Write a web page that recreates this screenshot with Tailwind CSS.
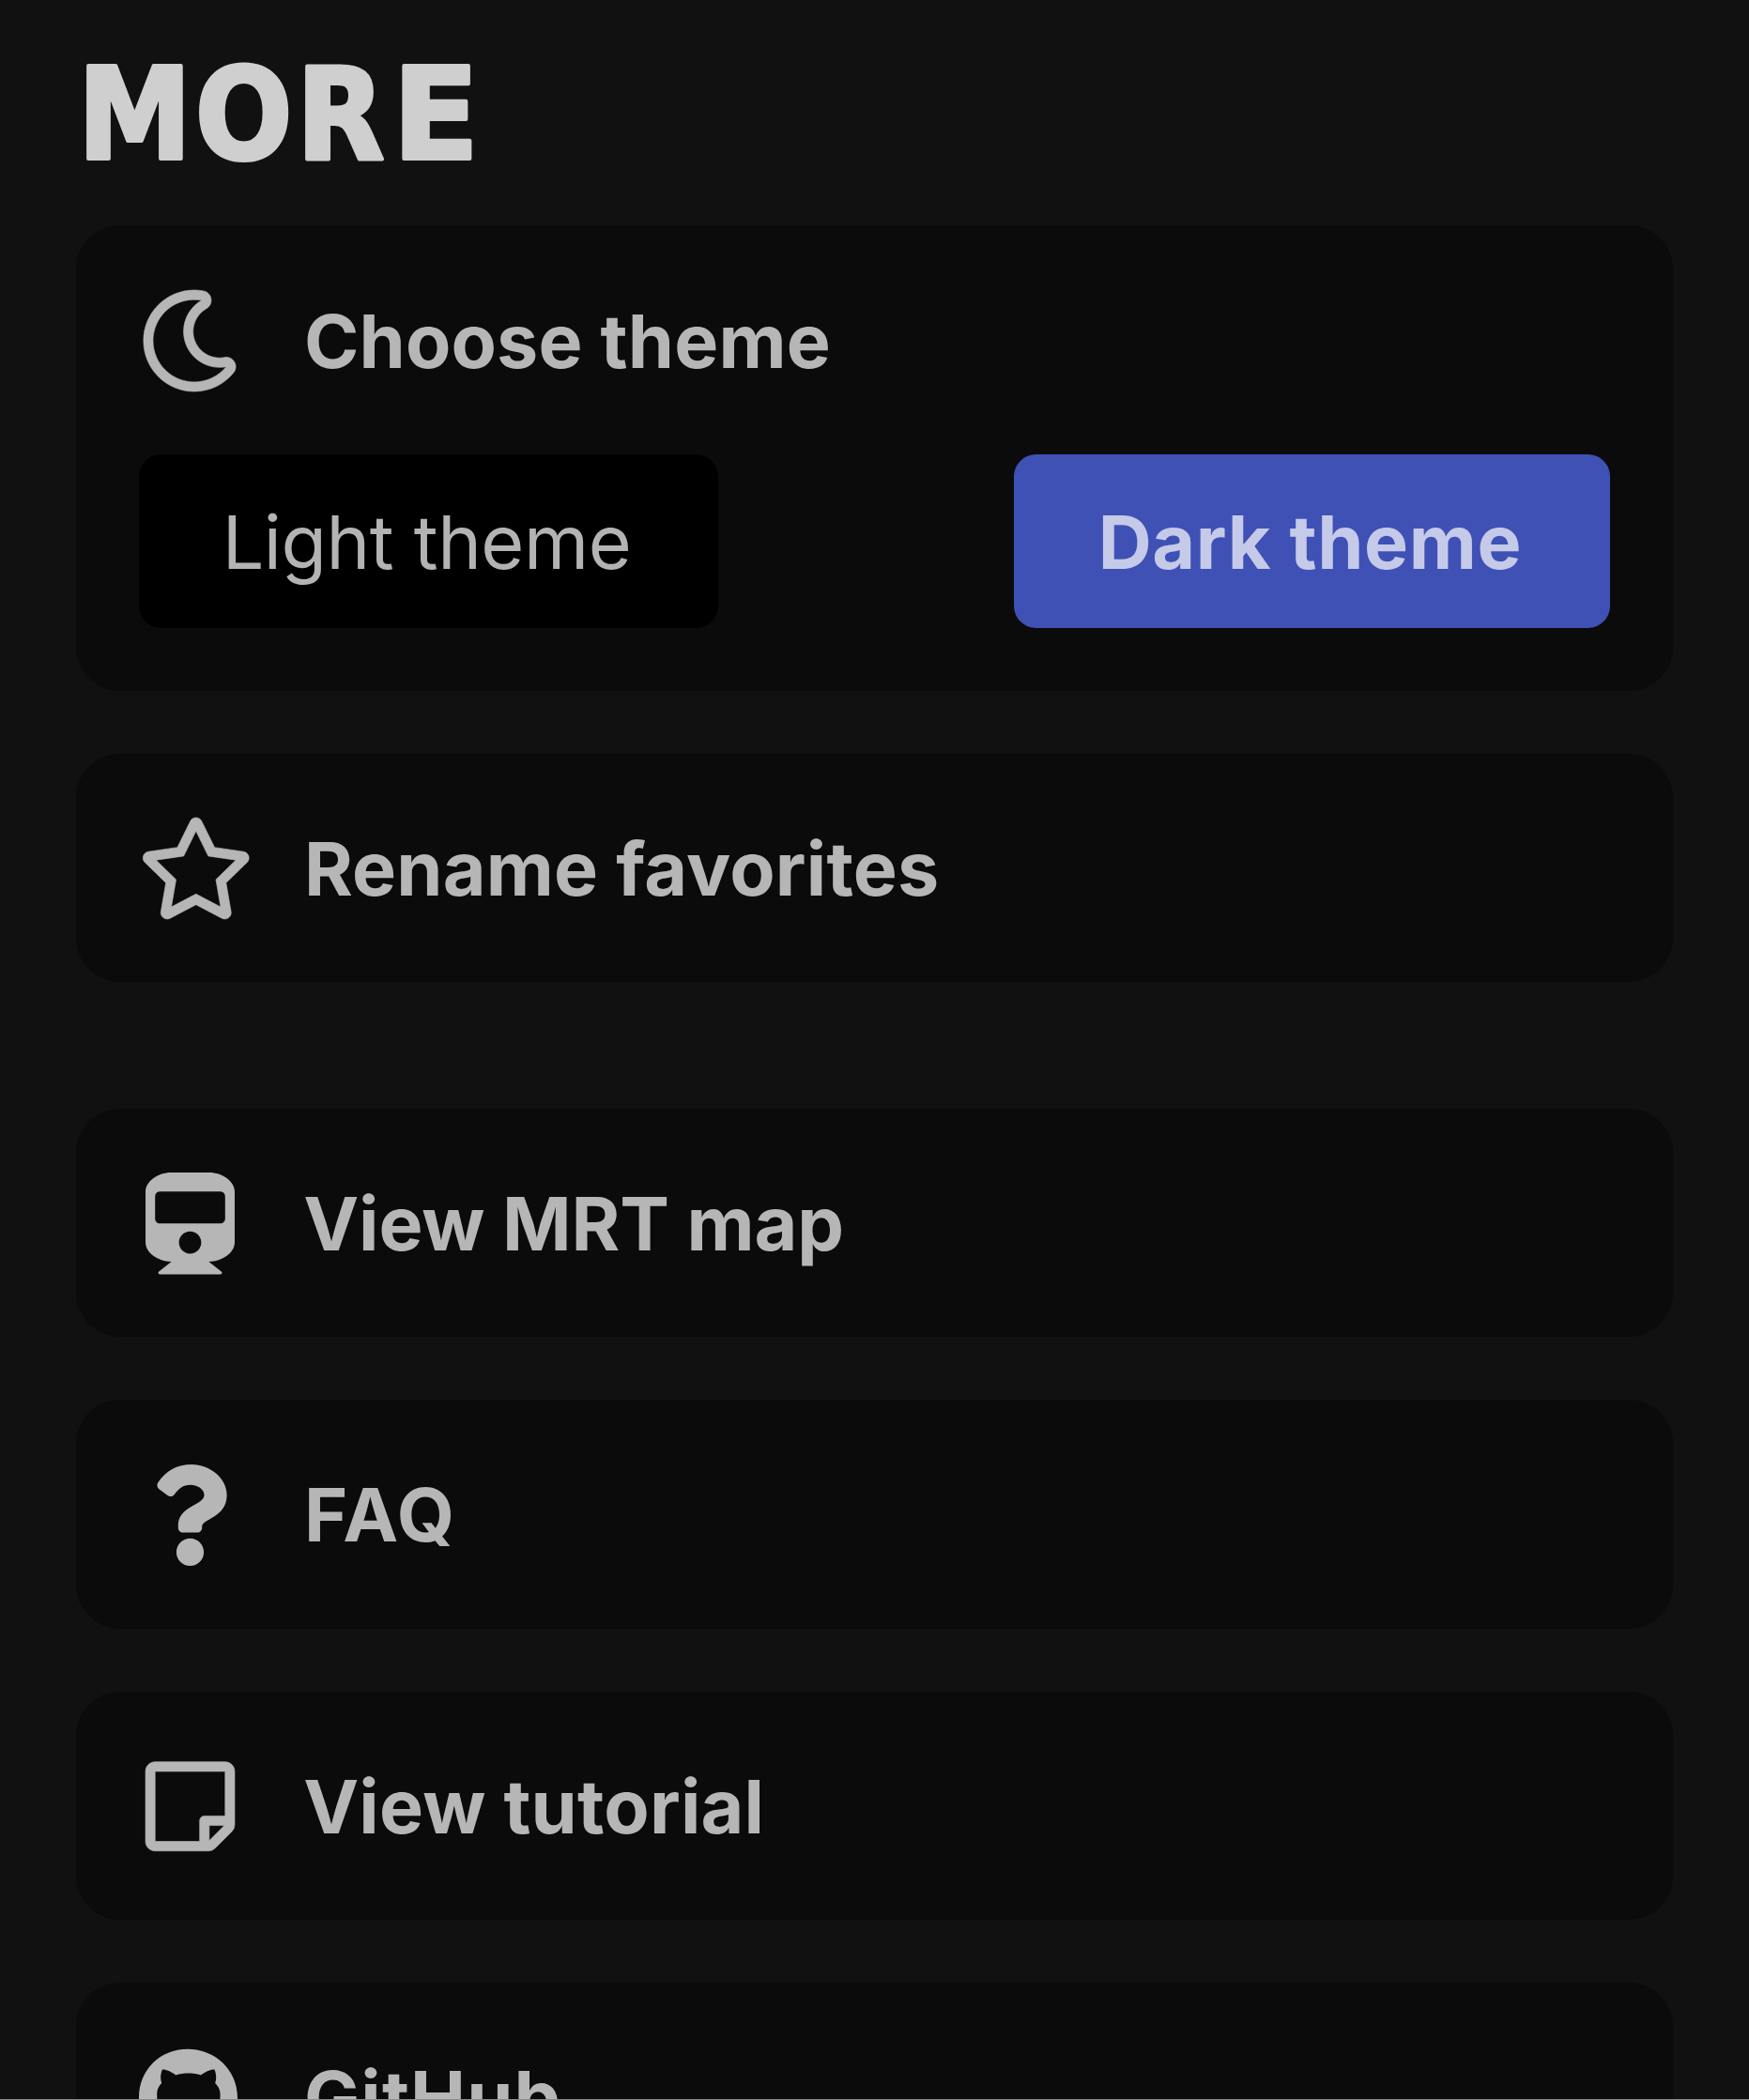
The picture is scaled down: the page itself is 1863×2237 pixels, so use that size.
<!DOCTYPE html>
<html lang="en">
<head>
<meta charset="utf-8">
<title>More</title>
<script src="https://cdn.jsdelivr.net/npm/@tailwindcss/browser@4"></script>
</head>
<body class="bg-[#111111]">
<div class="flex h-[2237px] w-[1863px] flex-col overflow-hidden font-['Inter',sans-serif] text-[79px] leading-none text-[#b6b6b6]">
  <main class="flex min-h-0 flex-1 flex-col overflow-hidden pr-[81px] pl-[81px]">
    <h1 class="h-[240px] shrink-0">
      <svg class="block h-[240px] w-[500px] overflow-visible" viewBox="81 0 500 240" fill="#cfcfcf" stroke="#cfcfcf" stroke-width="4" stroke-linejoin="round">
        <text x="83 208 316 418" y="169" font-family="'DejaVu Sans Condensed','DejaVu Sans',sans-serif" font-weight="700" font-size="135">MOR<tspan font-family="'DejaVu Sans',sans-serif">E</tspan></text>
      </svg>
    </h1>

    <section class="flex h-[496.2px] shrink-0 flex-col justify-between rounded-[47px] bg-[#0b0b0b] px-[67.4px] pt-[69px] pb-[67.7px]">
      <div class="flex h-[108px] items-center">
        <svg class="size-[108px] shrink-0 overflow-visible" viewBox="0 0 512 512" fill="currentColor" stroke="currentColor" stroke-width="3"><path d="M279.135 512c78.756 0 150.982-35.804 198.844-94.775 28.27-34.831-2.558-85.722-46.249-77.401-82.348 15.683-158.272-47.268-158.272-130.792 0-48.424 26.06-92.292 67.434-115.836 38.745-22.05 28.999-80.788-15.022-88.919A257.936 257.936 0 0 0 279.135 0c-141.36 0-256 114.575-256 256 0 141.36 114.576 256 256 256zm0-464c12.985 0 25.689 1.201 38.016 3.478-54.76 31.163-91.693 90.042-91.693 157.554 0 113.848 103.641 199.2 215.252 177.944C402.574 433.964 344.366 464 279.135 464c-114.875 0-208-93.125-208-208s93.125-208 208-208z"/></svg>
        <h2 class="ml-[67.6px] font-bold tracking-[0.15px] whitespace-nowrap">Choose theme</h2>
      </div>
      <div class="flex justify-between">
        <button class="h-[185px] w-[616.3px] rounded-[23.5px] bg-black pt-[2px] pl-[88.3px] text-left tracking-[-0.49px] whitespace-nowrap text-[#b3b3b3]">Light theme</button>
        <button class="h-[185px] w-[634.5px] rounded-[23.5px] bg-[#3f51b5] pt-[2px] pl-[89.6px] text-left font-bold tracking-[0.6px] whitespace-nowrap text-[#c5cae9]">Dark theme</button>
      </div>
    </section>

    <section class="mt-[66.6px] flex h-[243.6px] shrink-0 items-center rounded-[47px] bg-[#0b0b0b] px-[67.4px]">
      <div class="flex h-[108px] w-[108px] shrink-0">
        <svg class="mt-[0.5px] h-[108px] w-[121.5px] shrink-0 overflow-visible" viewBox="0 0 576 512" fill="currentColor" stroke="currentColor" stroke-width="3"><path d="M528.1 171.5L382 150.2 316.7 17.8c-11.7-23.6-45.6-23.9-57.4 0L194 150.2 47.9 171.5c-26.2 3.8-36.7 36.1-17.7 54.6l105.7 103-25 145.5c-4.5 26.3 23.2 46 46.4 33.7L288 439.6l130.7 68.7c23.2 12.2 50.9-7.4 46.4-33.7l-25-145.5 105.7-103c19-18.5 8.5-50.8-17.7-54.6zM388.6 312.3l23.7 138.4L288 385.4l-124.3 65.3 23.7-138.4-100.6-98 139-20.2 62.2-126 62.2 126 139 20.2-100.6 98z"/></svg>
      </div>
      <h2 class="ml-[67.6px] pt-[2px] font-bold tracking-[0.2px] whitespace-nowrap">Rename favorites</h2>
    </section>

    <div class="mt-[134.5px] flex shrink-0 flex-col gap-[66.8px]">
      <section class="flex h-[243.6px] items-center rounded-[47px] bg-[#0b0b0b] px-[67.4px]">
        <div class="flex h-[108px] w-[108px] shrink-0 justify-center">
          <svg class="mt-[0.5px] h-[108.5px] w-[95px]" viewBox="0 0 448 512" fill="currentColor"><path d="M448 96v256c0 51.815-61.624 96-130.022 96l62.98 49.721C386.905 502.417 383.562 512 376 512H72c-7.578 0-10.892-9.594-4.957-14.279L130.022 448C61.82 448 0 403.954 0 352V96C0 42.981 64 0 128 0h192c65 0 128 42.981 128 96zm-48 136V120c0-13.255-10.745-24-24-24H72c-13.255 0-24 10.745-24 24v112c0 13.255 10.745 24 24 24h304c13.255 0 24-10.745 24-24zm-176 64c-30.928 0-56 25.072-56 56s25.072 56 56 56 56-25.072 56-56-25.072-56-56-56z"/></svg>
        </div>
        <h2 class="ml-[66.8px] pt-[2px] font-bold tracking-[-0.1px] whitespace-nowrap">View MRT map</h2>
      </section>

      <section class="flex h-[243.6px] items-center rounded-[47px] bg-[#0b0b0b] px-[67.4px]">
        <div class="flex h-[108px] w-[108px] shrink-0 justify-center">
          <svg class="mt-[0.8px] h-[108px] w-[81px]" viewBox="0 0 384 512" fill="currentColor"><path d="M202.021 0C122.202 0 70.503 32.703 29.914 91.026c-7.363 10.58-5.093 25.086 5.178 32.874l43.138 32.709c10.373 7.865 25.132 6.026 33.253-4.148 25.049-31.381 43.63-49.449 82.757-49.449 30.764 0 68.816 19.799 68.816 49.631 0 22.552-18.617 34.134-48.993 51.164-35.423 19.86-82.299 44.576-82.299 106.405V320c0 13.255 10.745 24 24 24h72.471c13.255 0 24-10.745 24-24v-5.773c0-42.86 125.268-44.645 125.268-160.627C377.504 66.256 286.902 0 202.021 0zM192 373.459c-38.196 0-69.271 31.075-69.271 69.271 0 38.195 31.075 69.27 69.271 69.27s69.271-31.075 69.271-69.271-31.075-69.27-69.271-69.27z"/></svg>
        </div>
        <h2 class="ml-[67.6px] pt-[1px] font-bold tracking-[2px] whitespace-nowrap">FAQ</h2>
      </section>

      <section class="flex h-[243.6px] items-center rounded-[47px] bg-[#0b0b0b] px-[67.4px]">
        <div class="flex h-[108px] w-[108px] shrink-0 justify-center">
          <svg class="mt-[0.7px] h-[108.5px] w-[95px] overflow-visible" viewBox="0 0 448 512" fill="currentColor" stroke="currentColor" stroke-width="3"><path d="M448 348.106V80c0-26.51-21.49-48-48-48H48C21.49 32 0 53.49 0 80v351.988c0 26.51 21.49 48 48 48h268.118a48 48 0 0 0 33.941-14.059l83.882-83.882A48 48 0 0 0 448 348.106zm-128 80v-76.118h76.118L320 428.106zM400 80v223.988H296c-13.255 0-24 10.745-24 24v104H48V80h352z"/></svg>
        </div>
        <h2 class="ml-[66.8px] pt-[2px] font-bold tracking-[0.2px] whitespace-nowrap">View tutorial</h2>
      </section>

      <section class="flex h-[243.6px] items-center rounded-[47px] bg-[#0b0b0b] px-[67.4px]">
        <div class="flex h-[108px] w-[108px] shrink-0">
          <svg class="mt-[0.7px] h-[108.5px] w-[105px]" viewBox="0 0 496 512" fill="currentColor"><path d="M244.8 8C106.1 8 0 113.3 0 252c0 110.9 69.8 205.8 169.5 239.2 12.8 2.3 17.3-5.6 17.3-12.1 0-6.2-.3-40.4-.3-61.4 0 0-70 15-84.7-29.8 0 0-11.4-29.1-27.8-36.6 0 0-22.9-15.7 1.6-15.4 0 0 24.9 2 38.6 25.8 21.9 38.6 58.6 27.5 72.9 20.9 2.3-16 8.8-27.1 16-33.7-55.9-6.2-112.3-14.3-112.3-110.5 0-27.5 7.6-41.3 23.6-58.9-2.6-6.5-11.1-33.3 2.6-67.9 20.9-6.5 69 27 69 27 20-5.6 41.5-8.5 62.8-8.5s42.8 2.9 62.8 8.5c0 0 48.1-33.6 69-27 13.7 34.7 5.2 61.4 2.6 67.9 16 17.7 25.8 31.5 25.8 58.9 0 96.5-58.9 104.2-114.8 110.5 9.2 7.9 17 22.9 17 46.4 0 33.7-.3 75.4-.3 83.6 0 6.5 4.6 14.4 17.3 12.1C428.2 457.8 496 362.9 496 252 496 113.3 383.5 8 244.8 8z"/></svg>
        </div>
        <h2 class="ml-[67.6px] pt-[2px] font-bold tracking-[1.1px] whitespace-nowrap">GitHub</h2>
      </section>
    </div>
  </main>
  <div class="h-px shrink-0 bg-[#8c8a8a]"></div>
</div>
</body>
</html>
